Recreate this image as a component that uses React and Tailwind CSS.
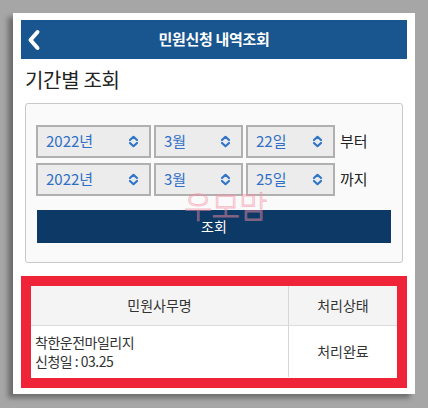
import React from "react";

const F = { fontFamily: '"Noto Sans CJK KR", "Noto Sans", sans-serif' };

function Arrows() {
  return (
    <svg width="11" height="13" viewBox="0 0 11 13" className="shrink-0">
      <path d="M2 5 L5.5 1.8 L9 5" fill="none" stroke="#2f76c9" strokeWidth="2.2" strokeLinecap="round" strokeLinejoin="round" />
      <path d="M2 8 L5.5 11.2 L9 8" fill="none" stroke="#2f76c9" strokeWidth="2.2" strokeLinecap="round" strokeLinejoin="round" />
    </svg>
  );
}

function Sel({ w, label }) {
  return (
    <div className={`${w} h-[33px] flex items-center justify-between bg-[#ececec] border-2 border-[#b0b0b0] pl-[8px] pr-[10px] text-[15px] text-[#2f6fc8]`}>
      <span>{label}</span>
      <Arrows />
    </div>
  );
}

export default function App() {
  return (
    <div style={F} className="w-[428px] h-[408px] bg-[#a6a6a6] pt-[13px] pl-[13px] overflow-hidden">
      <div className="w-[402px] h-[381px] bg-white px-[8px] pt-[7px] shadow-[-5px_4px_5px_rgba(0,0,0,0.35)] relative">
        <div className="h-[39px] bg-[#19568f] flex items-center relative">
          <svg width="14" height="22" viewBox="0 0 14 22" className="absolute left-[6px] top-[9px]">
            <path d="M10.5 3 L3.5 11 L10.5 19" fill="none" stroke="white" strokeWidth="4" strokeLinecap="round" strokeLinejoin="round" />
          </svg>
          <div className="w-full text-center text-white text-[15px] font-bold tracking-[-0.3px]">민원신청 내역조회</div>
        </div>
        <div className="pl-[4px] pt-[6px] h-[44px] text-[20px] text-[#222] leading-[30px] tracking-[-0.3px]">기간별 조회</div>
        <div className="mx-[4px] h-[160px] border border-[#c9c9c9] rounded-[3px] bg-[#fafafa] pl-[10px] pr-[11px] pt-[21px] flex flex-col">
          <div className="flex items-center gap-[3px]">
            <Sel w="w-[115px]" label="2022년" />
            <Sel w="w-[89px]" label="3월" />
            <Sel w="w-[89px]" label="22일" />
            <span className="ml-[2px] text-[15px] text-[#222]">부터</span>
          </div>
          <div className="flex items-center gap-[3px] mt-[5px]">
            <Sel w="w-[115px]" label="2022년" />
            <Sel w="w-[89px]" label="3월" />
            <Sel w="w-[89px]" label="25일" />
            <span className="ml-[2px] text-[15px] text-[#222]">까지</span>
          </div>
          <div className="mt-[14px] ml-[1px] h-[33px] bg-[#0c3966] flex items-center justify-center text-white text-[14px]">조회</div>
        </div>
        <div className="mt-[13px] h-[112px] border-[10px] border-[#f02438] bg-white">
          <div className="flex h-[40px] bg-[#f4f4f4] border-b border-[#dcdcdc] text-[14px] text-[#333]">
            <div className="w-[258px] border-r border-[#d6d6d6] flex items-center justify-center">민원사무명</div>
            <div className="flex-1 flex items-center justify-center">처리상태</div>
          </div>
          <div className="flex h-[51px] text-[14px] text-[#333]">
            <div className="w-[258px] border-r border-[#d6d6d6] pl-[4px] flex flex-col justify-center leading-[19px] tracking-[-0.5px]">
              <span>착한운전마일리지</span>
              <span>신청일 : 03.25</span>
            </div>
            <div className="flex-1 flex items-center justify-center">처리완료</div>
          </div>
        </div>
        <div className="absolute left-[171px] top-[176px] text-[31px] font-light leading-none text-[rgba(255,190,200,0.25)] [-webkit-text-stroke:0.8px_rgba(245,130,155,0.55)] tracking-[-1px] pointer-events-none">우모맘</div>
      </div>
    </div>
  );
}
